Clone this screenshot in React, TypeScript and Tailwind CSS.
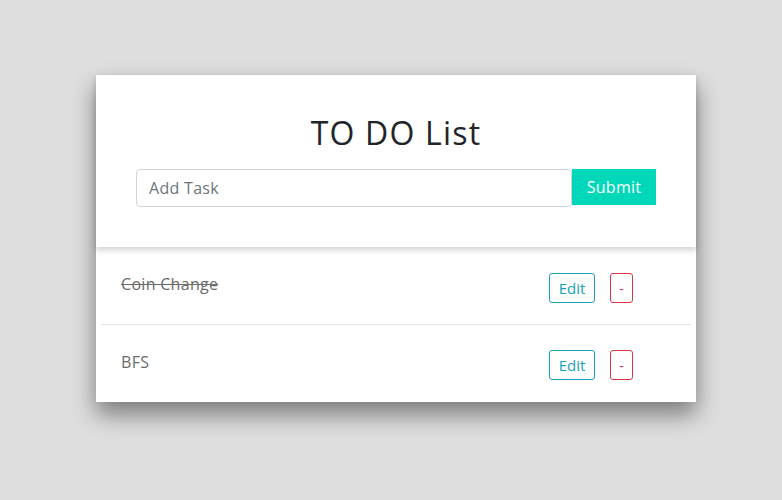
import { useState } from "react";

type Task = { id: number; text: string; done: boolean };

const initialTasks: Task[] = [
  { id: 1, text: "Coin Change", done: true },
  { id: 2, text: "BFS", done: false },
];

export default function App() {
  const [tasks] = useState<Task[]>(initialTasks);

  return (
    <div className="min-h-screen w-full bg-[#dedede] pt-[75px] pl-[10px] font-['Open_Sans',sans-serif]">
      <div className="mx-auto w-[600px] bg-white shadow-[0_12px_22px_rgba(0,0,0,0.45)]">
        {/* Header */}
        <div className="relative z-10 bg-white px-10 pt-[38px] pb-[40px] shadow-[0_3px_6px_rgba(0,0,0,0.18)]">
          <h1 className="text-center text-[32px] leading-[40px] tracking-[1.2px] text-[#212529]">TO DO List</h1>
          <div className="mt-[16px] flex">
            <input
              type="text"
              placeholder="Add Task"
              className="h-[38px] flex-1 rounded-[4px] border border-[#ced4da] px-3 text-[16px] tracking-[0.3px] text-[#495057] placeholder:text-[#6c757d] outline-none"
            />
            <button className="h-[36px] w-[84px] bg-[#00d8b9] text-[16px] tracking-[0.3px] text-white">Submit</button>
          </div>
        </div>

        {/* Tasks */}
        <ul className="px-[5px]">
          {tasks.map((t, i) => (
            <li
              key={t.id}
              className={`flex items-start justify-between pl-[20px] pr-[58px] ${
                i === 0 ? "pt-[26px] pb-[21px] border-b border-[#e5e5e5]" : "pt-[25px] pb-[22px]"
              }`}
            >
              <span
                className={`text-[16px] leading-[24px] tracking-[0.3px] text-[#6b6b6b] ${
                  t.done ? "-mt-[1px] line-through" : ""
                }`}
              >
                {t.text}
              </span>
              <div className="flex gap-[15px]">
                <button className="h-[30px] w-[46px] rounded-[3px] border border-[#17a2b8] text-[15px] text-[#17a2b8]">
                  Edit
                </button>
                <button className="h-[30px] w-[23px] rounded-[3px] border border-[#dc3545] text-[14px] text-[#dc3545]">
                  -
                </button>
              </div>
            </li>
          ))}
        </ul>
      </div>
    </div>
  );
}
